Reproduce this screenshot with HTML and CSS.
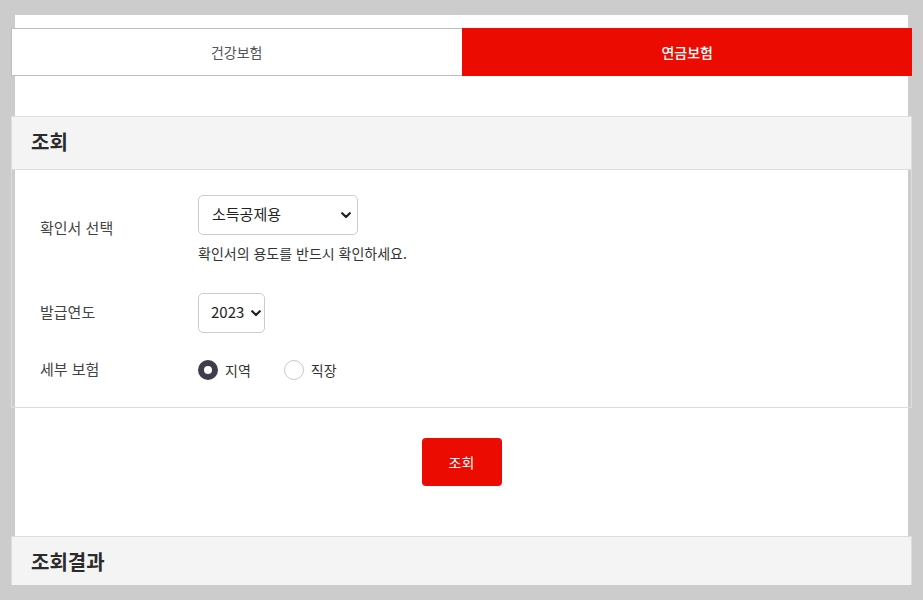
FILE: index.html
```html
<!DOCTYPE html>
<html lang="ko">
<head>
<meta charset="utf-8">
<title>조회</title>
<link rel="stylesheet" href="styles.css">
</head>
<body>
<div class="panel">
  <div class="tabs">
    <a class="tab">건강보험</a>
    <a class="tab tab-active">연금보험</a>
  </div>

  <section class="box">
    <h2 class="box-title">조회</h2>
    <div class="form">
      <div class="row row-doc">
        <div class="label">확인서 선택</div>
        <div class="field">
          <span class="select-wrap select-doc">
            <select class="select">
              <option>소득공제용</option>
            </select>
            <svg class="chev" width="10" height="7" viewBox="0 0 10 7"><path d="M1.2 1.2 L5 5 L8.8 1.2" fill="none" stroke="#222" stroke-width="2.2" stroke-linecap="round" stroke-linejoin="round"/></svg>
          </span>
          <p class="help">확인서의 용도를 반드시 확인하세요.</p>
        </div>
      </div>
      <div class="row row-year">
        <div class="label">발급연도</div>
        <div class="field">
          <span class="select-wrap select-year">
            <select class="select">
              <option>2023</option>
            </select>
            <svg class="chev" width="10" height="7" viewBox="0 0 10 7"><path d="M1.2 1.2 L5 5 L8.8 1.2" fill="none" stroke="#222" stroke-width="2.2" stroke-linecap="round" stroke-linejoin="round"/></svg>
          </span>
        </div>
      </div>
      <div class="row row-type">
        <div class="label">세부 보험</div>
        <div class="field radios">
          <label class="radio"><input type="radio" name="t" checked><span>지역</span></label>
          <label class="radio"><input type="radio" name="t"><span>직장</span></label>
        </div>
      </div>
    </div>
  </section>

  <div class="actions">
    <button class="btn">조회</button>
  </div>

  <section class="box">
    <h2 class="box-title">조회결과</h2>
  </section>
</div>
</body>
</html>
```

FILE: styles.css
```css
* { box-sizing: border-box; }
html, body { margin: 0; padding: 0; }
body {
  background: #cccccc;
  font-family: "Noto Sans CJK KR", "Noto Sans", sans-serif;
  color: #333;
  padding: 15px 15px 0;
}
.panel {
  background: #fff;
  height: 570px;
  padding-top: 13px;
  overflow-x: visible;
  overflow-y: clip;
}
.tabs {
  display: flex;
  margin: 0 -4px;
  height: 48px;
}
.tab {
  flex: 1;
  display: flex;
  align-items: center;
  justify-content: center;
  font-size: 14px;
  color: #555;
  background: #fff;
  border: 1px solid #bdbdbd;
  border-right: none;
}
.tab-active {
  background: #ec0b00;
  border-color: #ec0b00;
  color: #fff;
  font-weight: 500;
}
.box {
  margin: 40px -4px 0;
  border: 1px solid #dddddd;
  border-bottom: none;
}
.box-title {
  margin: 0;
  height: 53px;
  background: #f4f4f4;
  border-bottom: 1px solid #dddddd;
  padding: 0 19px 3px;
  display: flex;
  align-items: center;
  font-size: 20px;
  font-weight: 700;
  color: #2b2b2b;
}
.form {
  padding: 25px 28px 25px;
  border-bottom: 1px solid #dddddd;
}
.row {
  display: flex;
  align-items: center;
}
.row-year { margin-top: 29px; }
.row-type { margin-top: 25px; height: 24px; }
.label {
  width: 158px;
  font-size: 15px;
  color: #444;
  padding-bottom: 4px;
}
.field { flex: 1; }
.select-wrap {
  position: relative;
  display: inline-block;
  vertical-align: top;
}
.select {
  appearance: none;
  -webkit-appearance: none;
  display: block;
  height: 40px;
  border: 1px solid #cccccc;
  border-radius: 5px;
  background: #fff;
  font-family: inherit;
  font-size: 15px;
  color: #222;
  padding: 0 22px 4px 12px;
}
.select-doc .select { width: 160px; padding-left: 13px; }
.select-year .select { width: 67px; padding: 0 0 4px 12px; }
.chev {
  position: absolute;
  top: 17px;
  right: 7px;
  pointer-events: none;
}
.select-year .chev { right: 4px; }
.help {
  margin: 8px 0 0;
  font-size: 14px;
  line-height: 21px;
  color: #333;
}
.radios {
  display: flex;
  align-items: center;
  gap: 33px;
}
.radio {
  display: flex;
  align-items: center;
  gap: 7px;
  font-size: 14px;
  color: #333;
}
.radio input {
  appearance: none;
  -webkit-appearance: none;
  margin: 0;
  width: 20px;
  height: 20px;
  border-radius: 50%;
  border: 1px solid #c8c8c8;
  background: #fff;
}
.radio input:checked {
  border: 6px solid #3d3d4b;
  background: #fff;
}
.actions {
  display: flex;
  justify-content: center;
  padding: 30px 0 50px;
}
.btn {
  width: 80px;
  height: 48px;
  border: none;
  border-radius: 4px;
  background: #ec0b00;
  color: #fff;
  font-family: inherit;
  font-size: 14px;
}
.actions + .box { margin-top: 0; }
```
